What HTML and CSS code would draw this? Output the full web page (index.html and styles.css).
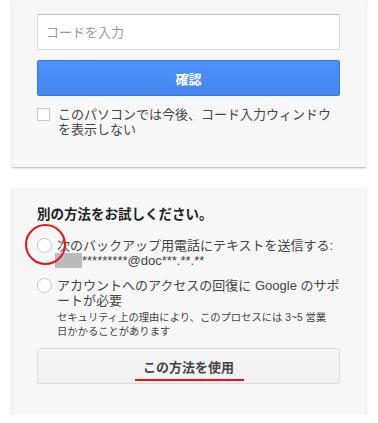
FILE: index.html
```html
<!DOCTYPE html>
<html lang="ja">

<head>
    <meta charset="UTF-8">
    <meta name="viewport" content="width=device-width, initial-scale=1.0">
    <title>2段階認証</title>
    <link rel="stylesheet" href="styles.css">
</head>

<body>
    <div class="card card-code">
        <input class="code-input" type="text" placeholder="コードを入力">
        <button class="btn btn-primary">確認</button>
        <label class="remember">
            <span class="checkbox"></span>
            <span class="remember-text">このパソコンでは今後、コード入力ウィンドウ<br>を表示しない</span>
        </label>
    </div>

    <div class="card card-other">
        <h2 class="other-title">別の方法をお試しください。</h2>

        <div class="option option-phone">
            <span class="radio"></span>
            <div class="option-text">
                次のバックアップ用電話にテキストを送信する:<br>
                <span class="masked"></span>*********@doc***.**.**
            </div>
            <span class="mark-circle"></span>
        </div>

        <div class="option">
            <span class="radio"></span>
            <div class="option-text">
                アカウントへのアクセスの回復に Google のサポ<br>ートが必要
                <div class="option-note">セキュリティ上の理由により、このプロセスには 3~5 営業<br>日かかることがあります</div>
            </div>
        </div>

        <button class="btn btn-secondary">
            <span class="btn-label">この方法を使用</span>
        </button>
    </div>
</body>

</html>
```

FILE: styles.css
```css
/* 全体 */
* {
    margin: 0;
    padding: 0;
    box-sizing: border-box;
}

body {
    background-color: #fff;
    color: #444;
    font-family: 'Liberation Sans', 'Noto Sans CJK JP', sans-serif;
    font-size: 13px;
    padding: 0 12px;
}

/* カード */
.card {
    width: 354px;
    background-color: #f7f7f7;
    box-shadow: 0 1px 2px rgba(0, 0, 0, 0.3);
    border-radius: 0 0 2px 2px;
    padding: 14px 26px 30px 25px;
}

.card-other {
    margin-top: 21px;
    border-radius: 2px;
    padding-top: 18px;
}

/* コード入力 */
.code-input {
    display: block;
    width: 100%;
    height: 36px;
    border: 1px solid #d9d9d9;
    border-top-color: #c0c0c0;
    background-color: #fff;
    padding: 0 8px;
    font-family: inherit;
    font-size: 13px;
    color: #333;
    outline: none;
}

.code-input::placeholder {
    color: #999;
}

/* ボタン */
.btn {
    display: block;
    width: 100%;
    height: 36px;
    border-radius: 2px;
    font-family: inherit;
    font-size: 13px;
    font-weight: bold;
    cursor: pointer;
}

.btn-primary {
    margin-top: 10px;
    color: #fff;
    background: linear-gradient(#4d90fe, #4787ed);
    border: 1px solid #3079ed;
}

.btn-secondary {
    margin-top: 9px;
    color: #444;
    background: linear-gradient(#f5f5f5, #f1f1f1);
    border: 1px solid #dcdcdc;
}

.btn-label {
    position: relative;
}

.btn-label::after {
    content: "";
    position: absolute;
    left: -8px;
    right: -10px;
    bottom: -6px;
    height: 2px;
    background-color: #e8141a;
}

/* 次回から表示しない */
.remember {
    display: flex;
    align-items: flex-start;
    gap: 8px;
    margin-top: 11px;
    line-height: 15px;
}

.checkbox {
    flex: none;
    width: 13px;
    height: 13px;
    margin-top: 1px;
    border: 1px solid #c6c6c6;
    background-color: #fff;
}

/* 別の方法 */
.other-title {
    font-size: 13.5px;
    font-weight: bold;
    color: #222;
    line-height: 18px;
}

.option {
    position: relative;
    display: flex;
    align-items: flex-start;
    gap: 5px;
    margin-right: -8px;
    line-height: 15px;
    margin-top: 10px;
}

.option-phone {
    margin-top: 14px;
}

.radio {
    flex: none;
    width: 15px;
    height: 15px;
    border: 1px solid #c6c6c6;
    border-radius: 50%;
    background-color: #fff;
}

.option-text {
    flex: 1;
}

.masked {
    display: inline-block;
    width: 27px;
    height: 15px;
    margin-left: -2px;
    vertical-align: -3px;
    background-color: #bbb;
}

.option-note {
    margin-top: 3px;
    font-size: 10.3px;
    line-height: 14px;
}

/* 強調の赤丸 */
.mark-circle {
    position: absolute;
    left: -12px;
    top: -14px;
    width: 41px;
    height: 41px;
    border: 2px solid #e8141a;
    border-radius: 50%;
}
```
